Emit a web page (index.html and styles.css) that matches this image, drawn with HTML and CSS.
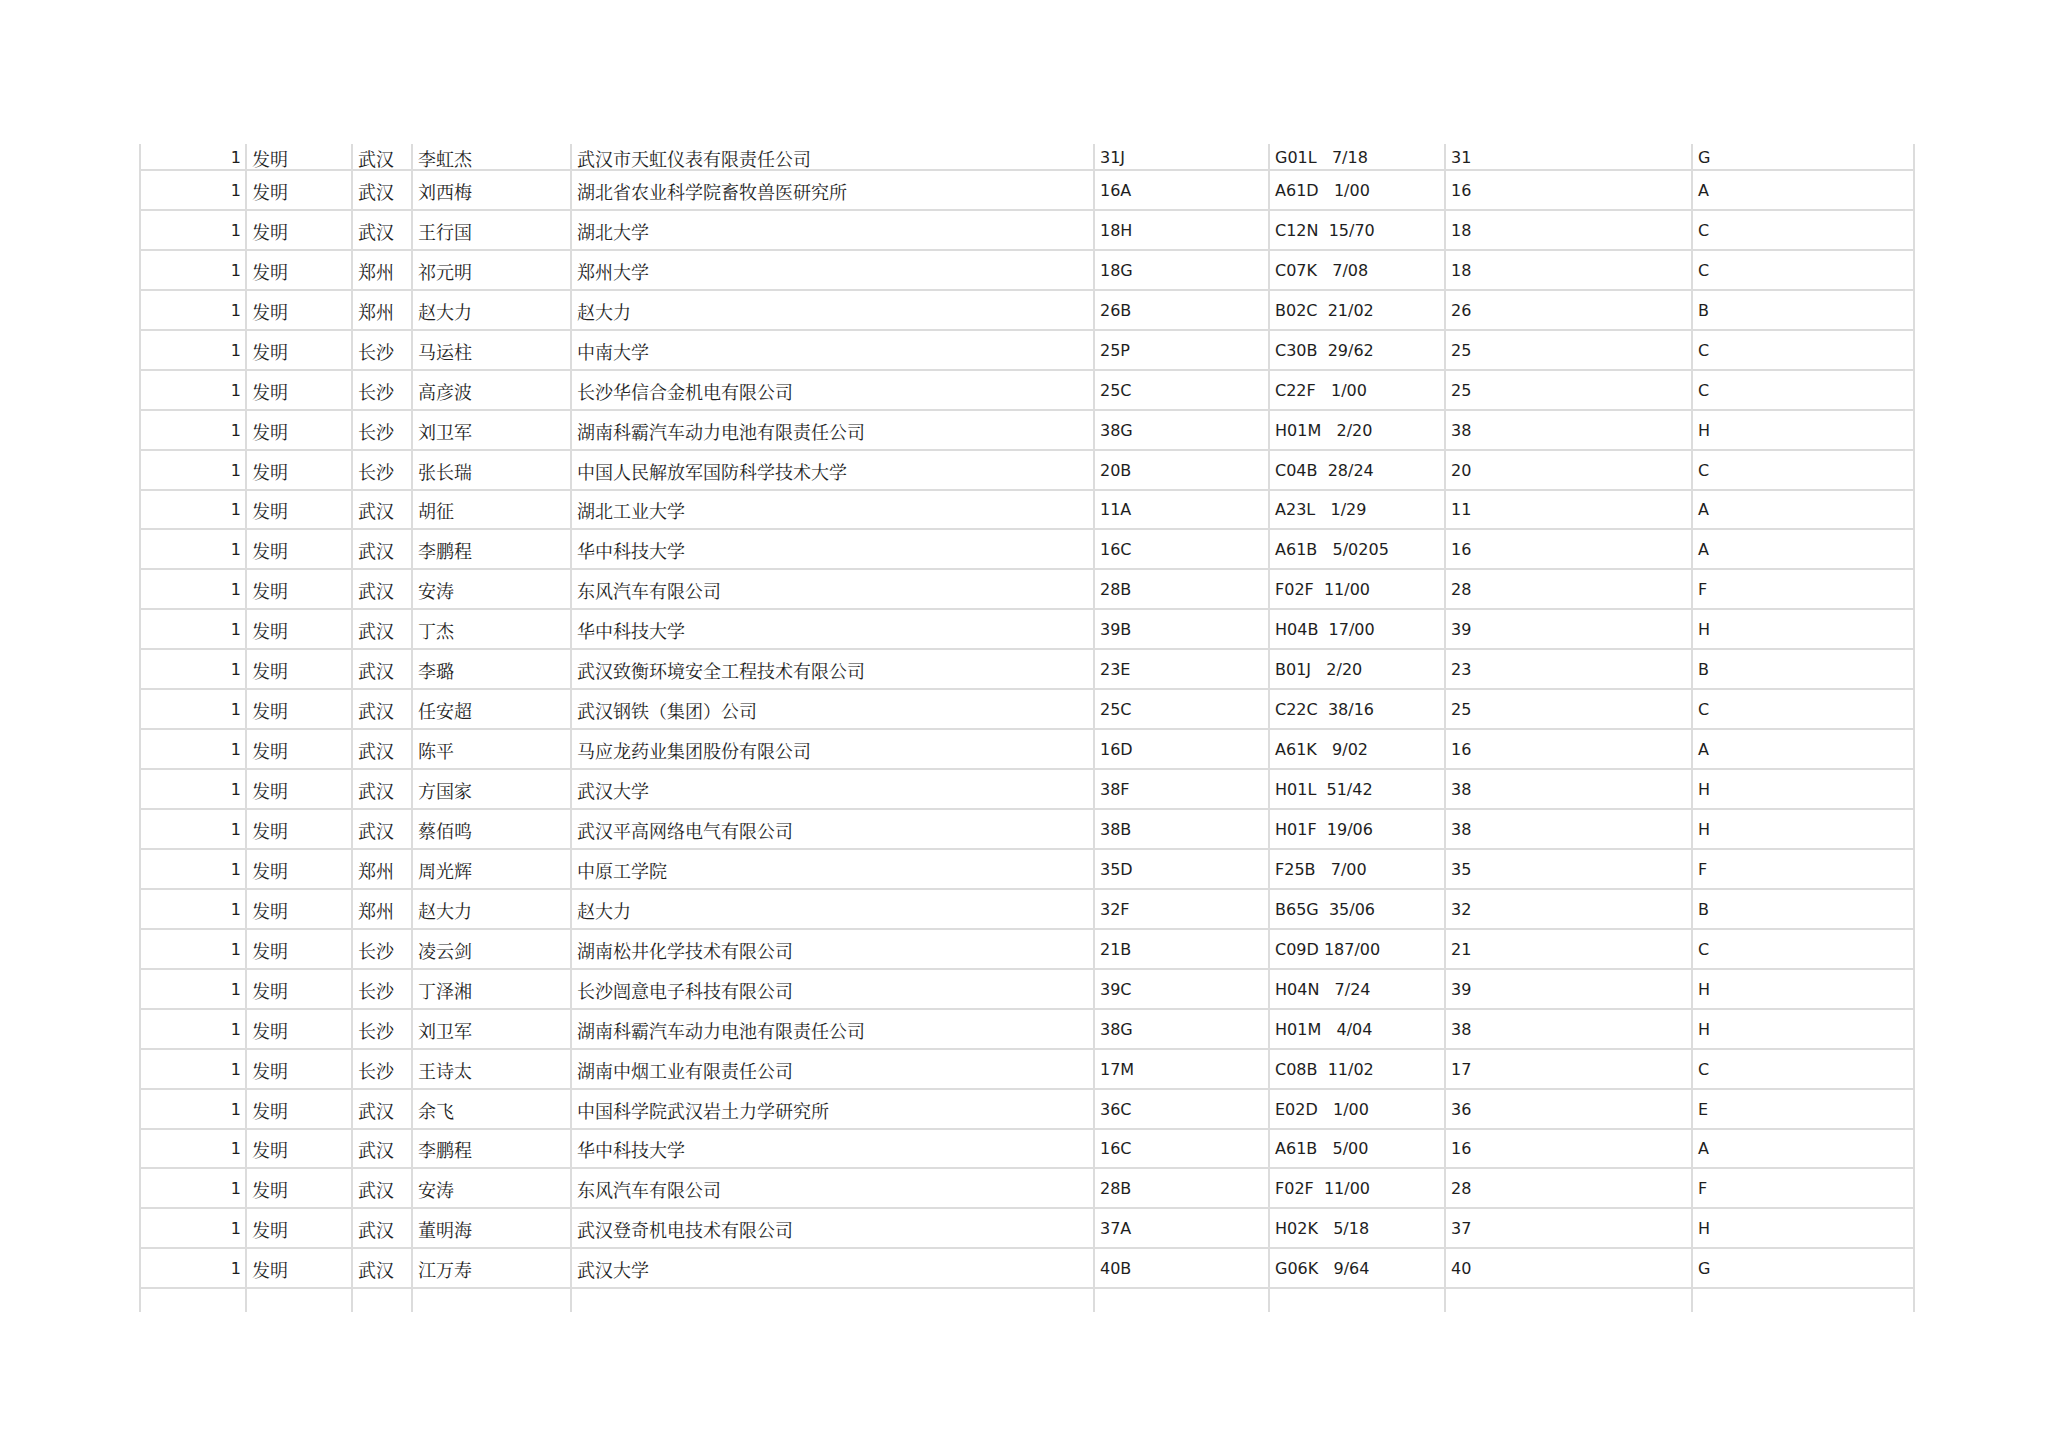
FILE: index.html
```html
<!DOCTYPE html>
<html lang="zh-CN">
<head>
<meta charset="utf-8">
<title>专利列表</title>
<link rel="stylesheet" href="styles.css">
</head>
<body>
<div class="page">
<table class="sheet">
<colgroup>
<col class="c1"><col class="c2"><col class="c3"><col class="c4"><col class="c5"><col class="c6"><col class="c7"><col class="c8"><col class="c9">
</colgroup>
<tbody>
<tr class="first"><td class="num">1</td><td class="zh">发明</td><td class="zh">武汉</td><td class="zh">李虹杰</td><td class="zh">武汉市天虹仪表有限责任公司</td><td class="lat">31J</td><td class="lat">G01L   7/18</td><td class="lat">31</td><td class="lat">G</td></tr>
<tr><td class="num">1</td><td class="zh">发明</td><td class="zh">武汉</td><td class="zh">刘西梅</td><td class="zh">湖北省农业科学院畜牧兽医研究所</td><td class="lat">16A</td><td class="lat">A61D   1/00</td><td class="lat">16</td><td class="lat">A</td></tr>
<tr><td class="num">1</td><td class="zh">发明</td><td class="zh">武汉</td><td class="zh">王行国</td><td class="zh">湖北大学</td><td class="lat">18H</td><td class="lat">C12N  15/70</td><td class="lat">18</td><td class="lat">C</td></tr>
<tr><td class="num">1</td><td class="zh">发明</td><td class="zh">郑州</td><td class="zh">祁元明</td><td class="zh">郑州大学</td><td class="lat">18G</td><td class="lat">C07K   7/08</td><td class="lat">18</td><td class="lat">C</td></tr>
<tr><td class="num">1</td><td class="zh">发明</td><td class="zh">郑州</td><td class="zh">赵大力</td><td class="zh">赵大力</td><td class="lat">26B</td><td class="lat">B02C  21/02</td><td class="lat">26</td><td class="lat">B</td></tr>
<tr><td class="num">1</td><td class="zh">发明</td><td class="zh">长沙</td><td class="zh">马运柱</td><td class="zh">中南大学</td><td class="lat">25P</td><td class="lat">C30B  29/62</td><td class="lat">25</td><td class="lat">C</td></tr>
<tr><td class="num">1</td><td class="zh">发明</td><td class="zh">长沙</td><td class="zh">高彦波</td><td class="zh">长沙华信合金机电有限公司</td><td class="lat">25C</td><td class="lat">C22F   1/00</td><td class="lat">25</td><td class="lat">C</td></tr>
<tr><td class="num">1</td><td class="zh">发明</td><td class="zh">长沙</td><td class="zh">刘卫军</td><td class="zh">湖南科霸汽车动力电池有限责任公司</td><td class="lat">38G</td><td class="lat">H01M   2/20</td><td class="lat">38</td><td class="lat">H</td></tr>
<tr><td class="num">1</td><td class="zh">发明</td><td class="zh">长沙</td><td class="zh">张长瑞</td><td class="zh">中国人民解放军国防科学技术大学</td><td class="lat">20B</td><td class="lat">C04B  28/24</td><td class="lat">20</td><td class="lat">C</td></tr>
<tr><td class="num">1</td><td class="zh">发明</td><td class="zh">武汉</td><td class="zh">胡征</td><td class="zh">湖北工业大学</td><td class="lat">11A</td><td class="lat">A23L   1/29</td><td class="lat">11</td><td class="lat">A</td></tr>
<tr><td class="num">1</td><td class="zh">发明</td><td class="zh">武汉</td><td class="zh">李鹏程</td><td class="zh">华中科技大学</td><td class="lat">16C</td><td class="lat">A61B   5/0205</td><td class="lat">16</td><td class="lat">A</td></tr>
<tr><td class="num">1</td><td class="zh">发明</td><td class="zh">武汉</td><td class="zh">安涛</td><td class="zh">东风汽车有限公司</td><td class="lat">28B</td><td class="lat">F02F  11/00</td><td class="lat">28</td><td class="lat">F</td></tr>
<tr><td class="num">1</td><td class="zh">发明</td><td class="zh">武汉</td><td class="zh">丁杰</td><td class="zh">华中科技大学</td><td class="lat">39B</td><td class="lat">H04B  17/00</td><td class="lat">39</td><td class="lat">H</td></tr>
<tr><td class="num">1</td><td class="zh">发明</td><td class="zh">武汉</td><td class="zh">李璐</td><td class="zh">武汉致衡环境安全工程技术有限公司</td><td class="lat">23E</td><td class="lat">B01J   2/20</td><td class="lat">23</td><td class="lat">B</td></tr>
<tr><td class="num">1</td><td class="zh">发明</td><td class="zh">武汉</td><td class="zh">任安超</td><td class="zh">武汉钢铁（集团）公司</td><td class="lat">25C</td><td class="lat">C22C  38/16</td><td class="lat">25</td><td class="lat">C</td></tr>
<tr><td class="num">1</td><td class="zh">发明</td><td class="zh">武汉</td><td class="zh">陈平</td><td class="zh">马应龙药业集团股份有限公司</td><td class="lat">16D</td><td class="lat">A61K   9/02</td><td class="lat">16</td><td class="lat">A</td></tr>
<tr><td class="num">1</td><td class="zh">发明</td><td class="zh">武汉</td><td class="zh">方国家</td><td class="zh">武汉大学</td><td class="lat">38F</td><td class="lat">H01L  51/42</td><td class="lat">38</td><td class="lat">H</td></tr>
<tr><td class="num">1</td><td class="zh">发明</td><td class="zh">武汉</td><td class="zh">蔡佰鸣</td><td class="zh">武汉平高网络电气有限公司</td><td class="lat">38B</td><td class="lat">H01F  19/06</td><td class="lat">38</td><td class="lat">H</td></tr>
<tr><td class="num">1</td><td class="zh">发明</td><td class="zh">郑州</td><td class="zh">周光辉</td><td class="zh">中原工学院</td><td class="lat">35D</td><td class="lat">F25B   7/00</td><td class="lat">35</td><td class="lat">F</td></tr>
<tr><td class="num">1</td><td class="zh">发明</td><td class="zh">郑州</td><td class="zh">赵大力</td><td class="zh">赵大力</td><td class="lat">32F</td><td class="lat">B65G  35/06</td><td class="lat">32</td><td class="lat">B</td></tr>
<tr><td class="num">1</td><td class="zh">发明</td><td class="zh">长沙</td><td class="zh">凌云剑</td><td class="zh">湖南松井化学技术有限公司</td><td class="lat">21B</td><td class="lat">C09D 187/00</td><td class="lat">21</td><td class="lat">C</td></tr>
<tr><td class="num">1</td><td class="zh">发明</td><td class="zh">长沙</td><td class="zh">丁泽湘</td><td class="zh">长沙闿意电子科技有限公司</td><td class="lat">39C</td><td class="lat">H04N   7/24</td><td class="lat">39</td><td class="lat">H</td></tr>
<tr><td class="num">1</td><td class="zh">发明</td><td class="zh">长沙</td><td class="zh">刘卫军</td><td class="zh">湖南科霸汽车动力电池有限责任公司</td><td class="lat">38G</td><td class="lat">H01M   4/04</td><td class="lat">38</td><td class="lat">H</td></tr>
<tr><td class="num">1</td><td class="zh">发明</td><td class="zh">长沙</td><td class="zh">王诗太</td><td class="zh">湖南中烟工业有限责任公司</td><td class="lat">17M</td><td class="lat">C08B  11/02</td><td class="lat">17</td><td class="lat">C</td></tr>
<tr><td class="num">1</td><td class="zh">发明</td><td class="zh">武汉</td><td class="zh">余飞</td><td class="zh">中国科学院武汉岩土力学研究所</td><td class="lat">36C</td><td class="lat">E02D   1/00</td><td class="lat">36</td><td class="lat">E</td></tr>
<tr><td class="num">1</td><td class="zh">发明</td><td class="zh">武汉</td><td class="zh">李鹏程</td><td class="zh">华中科技大学</td><td class="lat">16C</td><td class="lat">A61B   5/00</td><td class="lat">16</td><td class="lat">A</td></tr>
<tr><td class="num">1</td><td class="zh">发明</td><td class="zh">武汉</td><td class="zh">安涛</td><td class="zh">东风汽车有限公司</td><td class="lat">28B</td><td class="lat">F02F  11/00</td><td class="lat">28</td><td class="lat">F</td></tr>
<tr><td class="num">1</td><td class="zh">发明</td><td class="zh">武汉</td><td class="zh">董明海</td><td class="zh">武汉登奇机电技术有限公司</td><td class="lat">37A</td><td class="lat">H02K   5/18</td><td class="lat">37</td><td class="lat">H</td></tr>
<tr><td class="num">1</td><td class="zh">发明</td><td class="zh">武汉</td><td class="zh">江万寿</td><td class="zh">武汉大学</td><td class="lat">40B</td><td class="lat">G06K   9/64</td><td class="lat">40</td><td class="lat">G</td></tr>
<tr class="last"><td></td><td></td><td></td><td></td><td></td><td></td><td></td><td></td><td></td></tr>
</tbody>
</table>
</div>
</body>
</html>
```

FILE: styles.css
```css
html, body {
  margin: 0;
  padding: 0;
  background: #ffffff;
}

.page {
  padding: 144px 0 0 139px;
}

.sheet {
  border-collapse: collapse;
  table-layout: fixed;
  width: 1774px;
  color: #1e1e1e;
}

.c1 { width: 106px; }
.c2 { width: 106px; }
.c3 { width: 60px; }
.c4 { width: 159px; }
.c5 { width: 523px; }
.c6 { width: 175px; }
.c7 { width: 176px; }
.c8 { width: 247px; }
.c9 { width: 222px; }

.sheet tr {
  height: 39.95px;
}

.sheet tr.first {
  height: 26px;
}

.sheet tr.last {
  height: 24px;
}

.sheet td {
  border: 2px solid #dcdcdc;
  padding: 2px 6px 0 5px;
  vertical-align: middle;
  white-space: pre;
  overflow: hidden;
  line-height: 20px;
}

.sheet tr.first td {
  border-top: none;
}

.sheet tr.last td {
  border-bottom: none;
}

.num {
  text-align: right;
  padding-right: 4px !important;
  font-family: "DejaVu Sans", Verdana, sans-serif;
  font-size: 16px;
}

.lat {
  font-family: "DejaVu Sans", Verdana, sans-serif;
  font-size: 16px;
}

.zh {
  font-family: "Noto Serif CJK SC", "Noto Sans CJK SC", sans-serif;
  font-size: 18px;
  font-weight: 400;
}
```
